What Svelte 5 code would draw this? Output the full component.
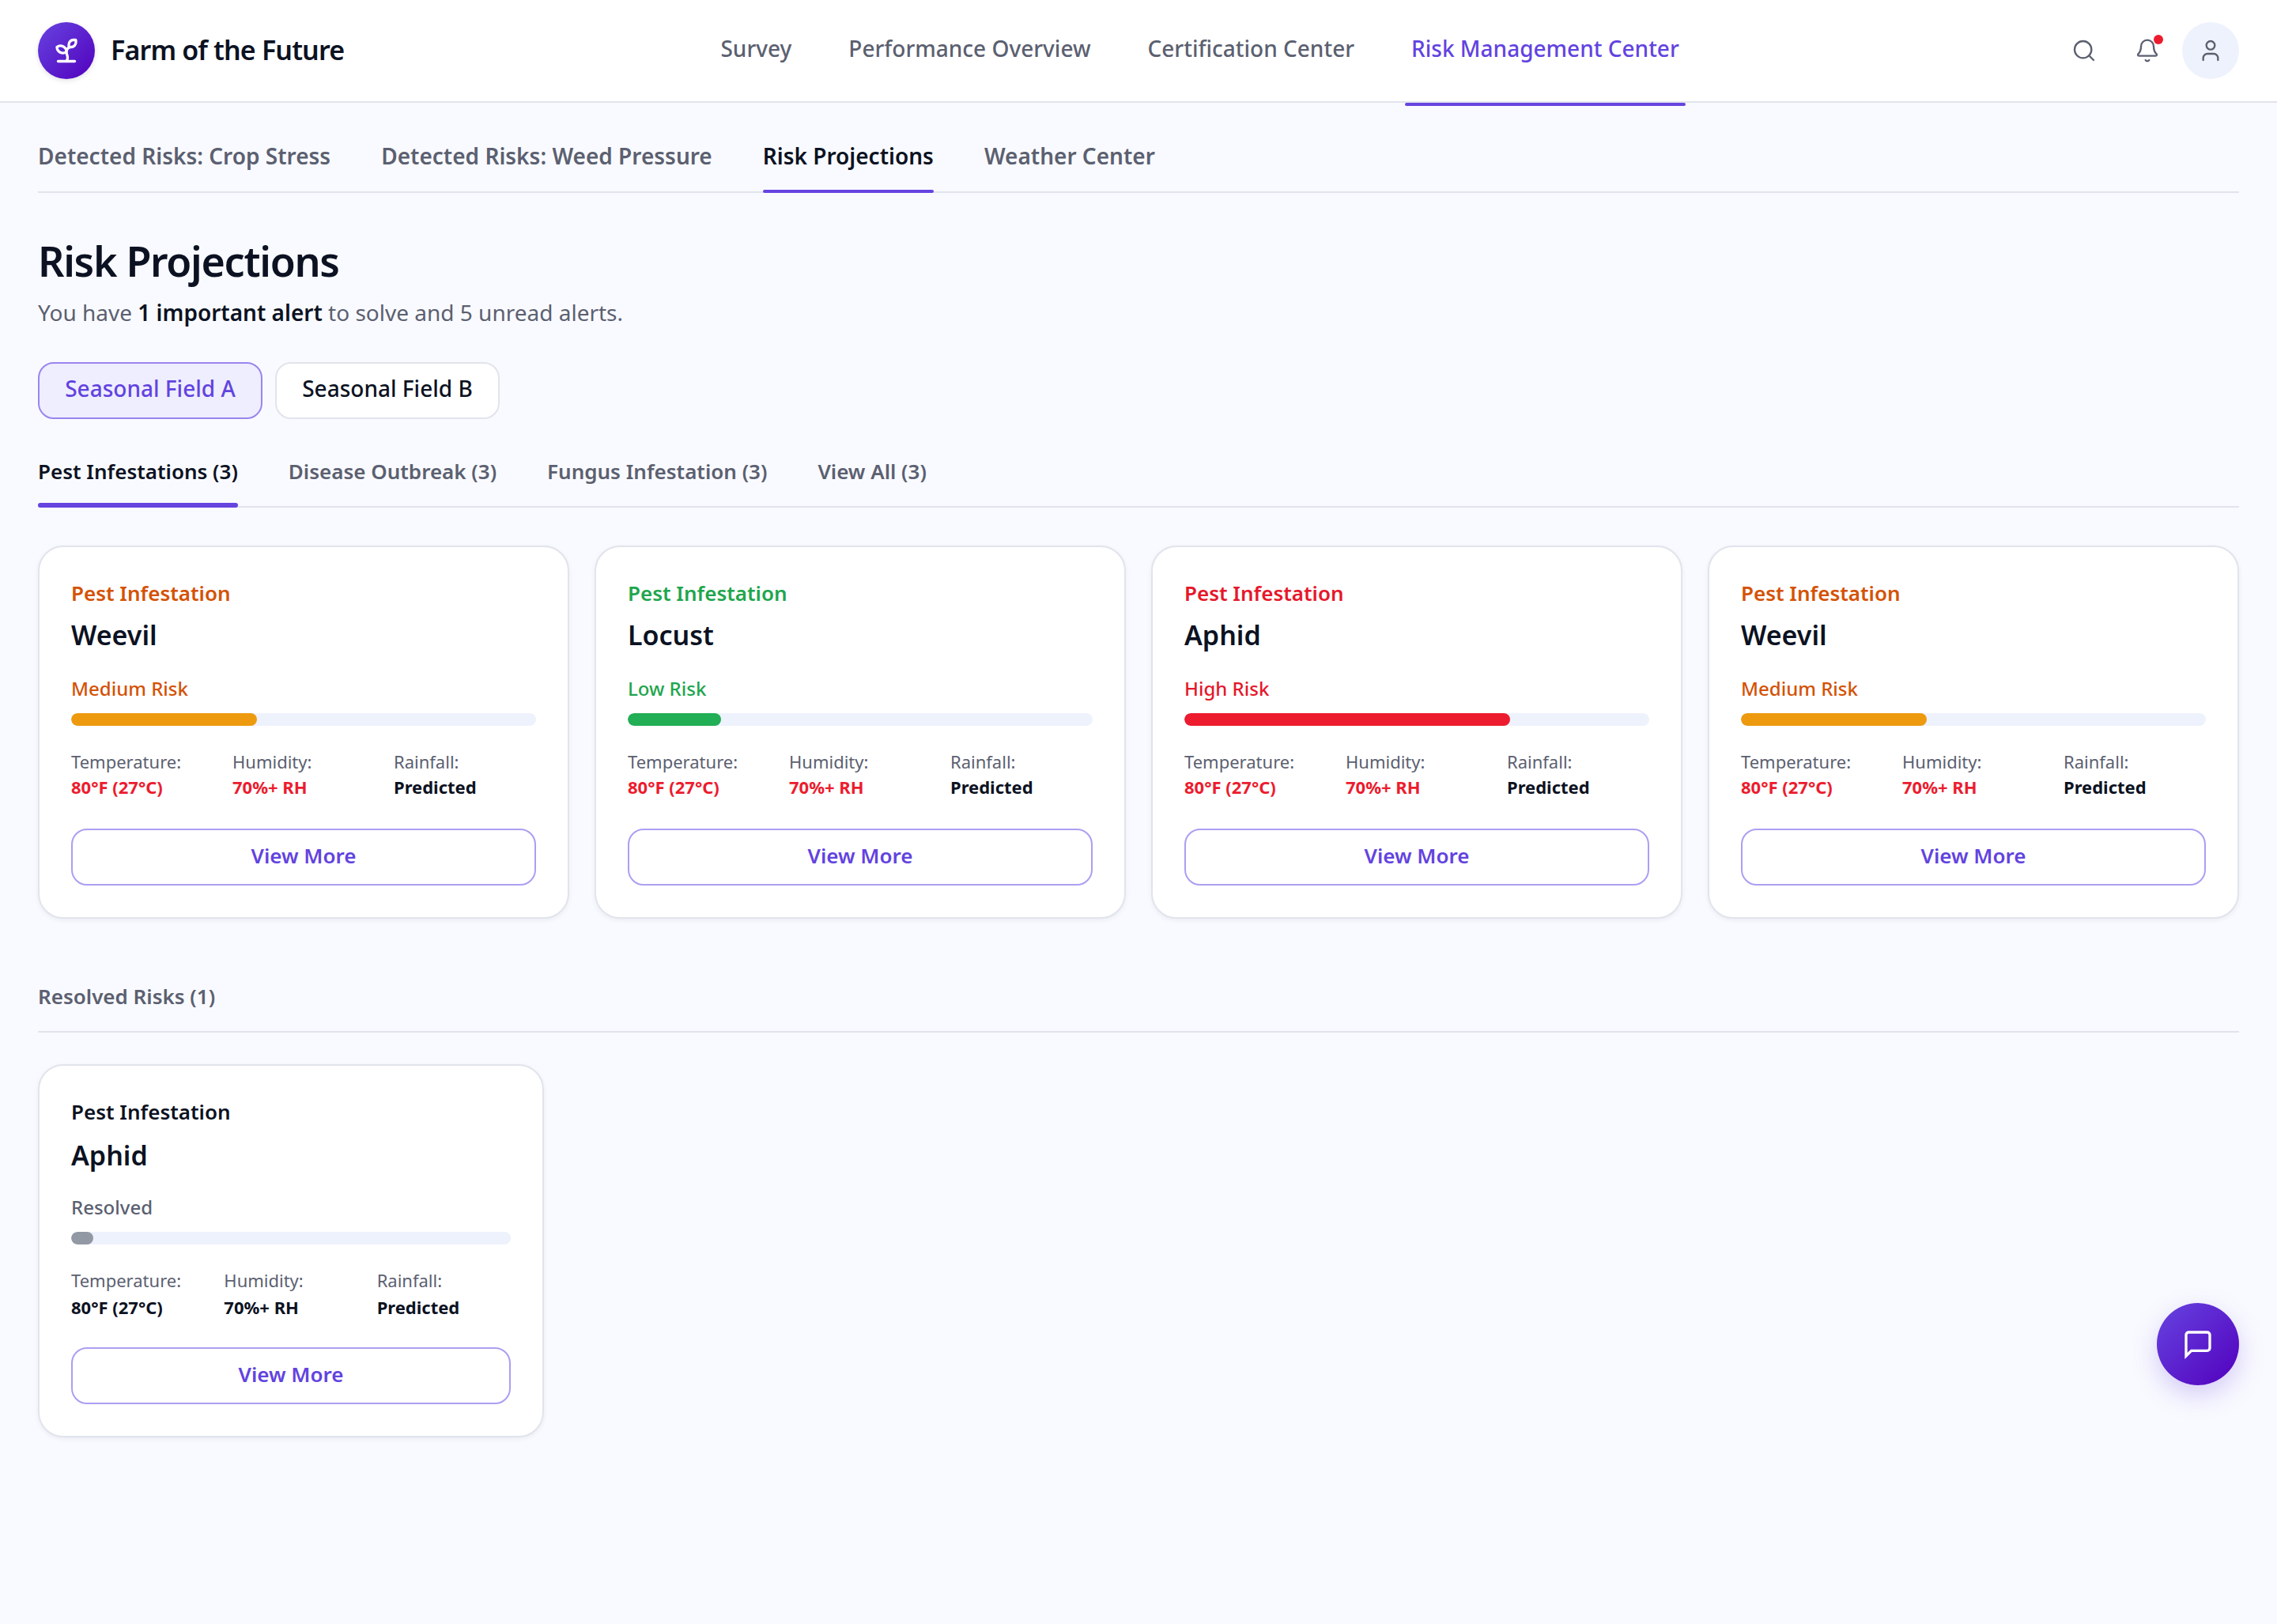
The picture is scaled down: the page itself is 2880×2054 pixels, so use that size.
<script lang="ts">
  interface Metric {
    label: string;
    value: string;
    alert?: boolean;
  }

  interface Risk {
    name: string;
    level: 'low' | 'medium' | 'high' | 'resolved';
    status: string;
    progress: number;
    metrics: Metric[];
  }

  const navItems = ['Survey', 'Performance Overview', 'Certification Center', 'Risk Management Center'];
  const sections = ['Detected Risks: Crop Stress', 'Detected Risks: Weed Pressure', 'Risk Projections', 'Weather Center'];
  const fields = ['Seasonal Field A', 'Seasonal Field B'];
  const categories = ['Pest Infestations (3)', 'Disease Outbreak (3)', 'Fungus Infestation (3)', 'View All (3)'];

  let activeNav = $state('Risk Management Center');
  let activeSection = $state('Risk Projections');
  let activeField = $state('Seasonal Field A');
  let activeCategory = $state('Pest Infestations (3)');

  function conditions(alert: boolean): Metric[] {
    return [
      { label: 'Temperature:', value: '80°F (27°C)', alert },
      { label: 'Humidity:', value: '70%+ RH', alert },
      { label: 'Rainfall:', value: 'Predicted' }
    ];
  }

  const activeRisks: Risk[] = [
    { name: 'Weevil', level: 'medium', status: 'Medium Risk', progress: 40, metrics: conditions(true) },
    { name: 'Locust', level: 'low', status: 'Low Risk', progress: 20, metrics: conditions(true) },
    { name: 'Aphid', level: 'high', status: 'High Risk', progress: 70, metrics: conditions(true) },
    { name: 'Weevil', level: 'medium', status: 'Medium Risk', progress: 40, metrics: conditions(true) }
  ];

  const resolvedRisks: Risk[] = [
    { name: 'Aphid', level: 'resolved', status: 'Resolved', progress: 5, metrics: conditions(false) }
  ];
</script>

{#snippet riskCard(risk: Risk)}
  <article class="card {risk.level}">
    <p class="card-category">Pest Infestation</p>
    <h3 class="card-title">{risk.name}</h3>
    <p class="card-status">{risk.status}</p>
    <div class="track">
      <div class="fill" style="width: {risk.progress}%"></div>
    </div>
    <dl class="metrics">
      {#each risk.metrics as metric}
        <div>
          <dt>{metric.label}</dt>
          <dd class:alert={metric.alert}>{metric.value}</dd>
        </div>
      {/each}
    </dl>
    <button type="button" class="view-more">View More</button>
  </article>
{/snippet}

<div class="page">
  <header class="topbar">
    <div class="brand">
      <span class="logo">
        <svg viewBox="0 0 24 24" aria-hidden="true">
          <path d="M14 9.536V7a4 4 0 0 1 4-4h1.5a.5.5 0 0 1 .5.5V5a4 4 0 0 1-4 4 4 4 0 0 0-4 4c0 2 1 3 1 5a5 5 0 0 1-1 3" />
          <path d="M4 9a5 5 0 0 1 8 4 5 5 0 0 1-8-4" />
          <path d="M5 21h14" />
        </svg>
      </span>
      <span class="brand-name">Farm of the Future</span>
    </div>

    <nav class="main-nav" aria-label="Main">
      {#each navItems as item}
        <button type="button" class="nav-item" class:active={item === activeNav} onclick={() => (activeNav = item)}>
          {item}
        </button>
      {/each}
    </nav>

    <div class="actions">
      <button type="button" class="icon-btn" aria-label="Search">
        <svg viewBox="0 0 24 24"><circle cx="11" cy="11" r="8" /><path d="m21 21-4.34-4.34" /></svg>
      </button>
      <button type="button" class="icon-btn" aria-label="Notifications">
        <svg viewBox="0 0 24 24">
          <path d="M10.268 21a2 2 0 0 0 3.464 0" />
          <path d="M3.262 15.326A1 1 0 0 0 4 17h16a1 1 0 0 0 .74-1.673C19.41 13.956 18 12.499 18 8A6 6 0 0 0 6 8c0 4.499-1.411 5.956-2.738 7.326" />
        </svg>
        <span class="dot"></span>
      </button>
      <button type="button" class="icon-btn avatar" aria-label="Account">
        <svg viewBox="0 0 24 24"><path d="M19 21v-2a4 4 0 0 0-4-4H9a4 4 0 0 0-4 4v2" /><circle cx="12" cy="7" r="4" /></svg>
      </button>
    </div>
  </header>

  <main>
    <div class="tabs section-tabs">
      {#each sections as section}
        <button type="button" class="tab" class:active={section === activeSection} onclick={() => (activeSection = section)}>
          {section}
        </button>
      {/each}
    </div>

    <h1>Risk Projections</h1>
    <p class="summary">You have <strong>1 important alert</strong> to solve and 5 unread alerts.</p>

    <div class="fields">
      {#each fields as field}
        <button type="button" class="field" class:active={field === activeField} onclick={() => (activeField = field)}>
          {field}
        </button>
      {/each}
    </div>

    <div class="tabs category-tabs">
      {#each categories as category}
        <button type="button" class="tab" class:active={category === activeCategory} onclick={() => (activeCategory = category)}>
          {category}
        </button>
      {/each}
    </div>

    <section class="grid">
      {#each activeRisks as risk}
        {@render riskCard(risk)}
      {/each}
    </section>

    <h2>Resolved Risks (1)</h2>
    <section class="resolved-list">
      {#each resolvedRisks as risk}
        {@render riskCard(risk)}
      {/each}
    </section>
  </main>

  <button type="button" class="chat" aria-label="Open chat">
    <svg viewBox="0 0 24 24"><path d="M21 15a2 2 0 0 1-2 2H7l-4 4V5a2 2 0 0 1 2-2h14a2 2 0 0 1 2 2z" /></svg>
  </button>
</div>

<style>
  :global(body) {
    background: #f9faff;
  }

  .page {
    position: relative;
    box-sizing: border-box;
    min-height: 2054px;
    background: #f9faff;
    color: #0c1222;
    font-family: 'Noto Sans', sans-serif;
    font-size: 28px;
  }

  .page * {
    box-sizing: border-box;
  }

  button {
    margin: 0;
    padding: 0;
    border: none;
    background: none;
    color: inherit;
    font: inherit;
    cursor: pointer;
  }

  h1,
  h2,
  h3,
  p,
  dl,
  dd {
    margin: 0;
  }

  svg {
    display: block;
    fill: none;
    stroke: currentColor;
    stroke-width: 2;
  }

  .topbar {
    display: flex;
    align-items: center;
    justify-content: space-between;
    height: 130px;
    padding: 0 48px;
    background: #fff;
    border-bottom: 2px solid #e1e4ec;
  }

  .brand {
    display: flex;
    align-items: center;
    gap: 20px;
  }

  .logo {
    display: grid;
    place-items: center;
    width: 72px;
    height: 72px;
    border-radius: 50%;
    background: linear-gradient(135deg, #6644e0, #5200bd);
    color: #fff;
    box-shadow: 0 2px 6px rgba(12, 18, 34, 0.12);
  }

  .logo svg {
    width: 36px;
    height: 36px;
    stroke-width: 2.2;
    stroke-linecap: round;
    stroke-linejoin: round;
  }

  .brand-name {
    padding-bottom: 2px;
    font-size: 34px;
    font-weight: 600;
    letter-spacing: -0.025em;
  }

  .main-nav {
    display: flex;
    gap: 56px;
    height: 128px;
  }

  .nav-item {
    position: relative;
    padding: 0 8px 6px;
    color: #5b6070;
    font-weight: 500;
  }

  .nav-item.active {
    color: #6243e0;
  }

  .nav-item.active::after {
    content: '';
    position: absolute;
    left: 0;
    right: 0;
    bottom: -6px;
    height: 4px;
    border-radius: 2px;
    background: #6644e0;
  }

  .actions {
    display: flex;
    gap: 8px;
  }

  .icon-btn {
    position: relative;
    display: grid;
    place-items: center;
    width: 72px;
    height: 72px;
    border-radius: 50%;
    color: #5b6070;
  }

  .icon-btn svg {
    width: 32px;
    height: 32px;
    stroke-width: 1.75;
    stroke-linecap: round;
    stroke-linejoin: round;
  }

  .avatar {
    background: #eef2fc;
  }

  .dot {
    position: absolute;
    top: 16px;
    right: 16px;
    width: 12px;
    height: 12px;
    border-radius: 50%;
    background: #ec1c2e;
  }

  main {
    padding: 32px 48px 0;
  }

  .tabs {
    display: flex;
    gap: 64px;
    border-bottom: 2px solid #e1e4ec;
  }

  .tab {
    position: relative;
    color: #5b6070;
    font-weight: 600;
  }

  .tab.active {
    color: #0c1222;
  }

  .tab.active::after {
    content: '';
    position: absolute;
    left: 0;
    right: 0;
    bottom: -2px;
    height: 4px;
    border-radius: 2px;
    background: #6644e0;
  }

  .section-tabs {
    height: 82px;
  }

  .section-tabs .tab {
    padding-bottom: 10px;
  }

  h1 {
    margin-top: 50px;
    font-size: 52px;
    font-weight: 600;
    line-height: 72px;
    letter-spacing: -0.025em;
  }

  .summary {
    margin-top: 9px;
    color: #5b6070;
    line-height: 40px;
  }

  .summary strong {
    color: #0c1222;
    font-weight: 600;
  }

  .fields {
    display: flex;
    gap: 16px;
    margin-top: 43px;
  }

  .field {
    min-width: 284px;
    height: 72px;
    padding: 0 32px 6px;
    border: 2px solid #e1e4ec;
    border-radius: 20px;
    background: #fff;
    font-weight: 500;
  }

  .field.active {
    border-color: #9a85ee;
    background: #eeeeff;
    color: #6243e0;
  }

  .category-tabs {
    height: 80px;
    margin-top: 32px;
  }

  .category-tabs .tab {
    padding-bottom: 10px;
    font-size: 26px;
  }

  .category-tabs .tab.active::after {
    height: 6px;
    border-radius: 3px;
  }

  .grid {
    display: grid;
    grid-template-columns: repeat(4, 1fr);
    gap: 32px;
    margin-top: 48px;
  }

  .card {
    display: flex;
    flex-direction: column;
    height: 472px;
    padding: 40px;
    border: 2px solid #e1e4ec;
    border-radius: 32px;
    background: #fff;
    box-shadow: 0 2px 6px rgba(12, 18, 34, 0.06);
  }

  .card-category {
    font-size: 26px;
    font-weight: 600;
    line-height: 36px;
  }

  .card-title {
    margin-top: 11px;
    font-size: 34px;
    font-weight: 600;
    line-height: 48px;
  }

  .card-status {
    margin-top: 26px;
    font-size: 24px;
    font-weight: 500;
    line-height: 35px;
  }

  .track {
    height: 16px;
    margin-top: 14px;
    border-radius: 8px;
    background: #eef2fc;
    overflow: hidden;
  }

  .fill {
    height: 100%;
    border-radius: 8px;
  }

  .medium .card-category,
  .medium .card-status {
    color: #d45205;
  }

  .medium .fill {
    background: #ed9a0e;
  }

  .low .card-category,
  .low .card-status {
    color: #1fa64d;
  }

  .low .fill {
    background: #22ae54;
  }

  .high .card-category,
  .high .card-status {
    color: #e5182b;
  }

  .high .fill {
    background: #ec1c2e;
  }

  .metrics {
    display: grid;
    grid-template-columns: repeat(3, 1fr);
    gap: 24px;
    margin-top: 29px;
    font-size: 22px;
    line-height: 32px;
    white-space: nowrap;
  }

  .metrics dt {
    color: #5b6070;
  }

  .metrics dd {
    font-weight: 700;
  }

  .metrics dd.alert {
    color: #ec1c2e;
  }

  .resolved .card-title {
    margin-top: 13px;
  }

  .resolved .card-status {
    margin-top: 24px;
    color: #5b6070;
  }

  .resolved .fill {
    background: #9299a5;
  }

  .resolved .metrics dd {
    margin-top: 2px;
  }

  .view-more {
    height: 72px;
    margin-top: auto;
    padding-bottom: 4px;
    border: 2px solid #ad9ef2;
    border-radius: 20px;
    color: #6243e0;
    font-size: 26px;
    font-weight: 600;
  }

  h2 {
    height: 64px;
    margin-top: 80px;
    border-bottom: 2px solid #e1e4ec;
    color: #5b6070;
    font-size: 26px;
    font-weight: 600;
    line-height: 36px;
  }

  .resolved-list {
    width: 640px;
    margin-top: 40px;
  }

  .chat {
    position: absolute;
    top: 1648px;
    right: 48px;
    display: grid;
    place-items: center;
    width: 104px;
    height: 104px;
    border-radius: 50%;
    background: linear-gradient(135deg, #6644e0, #5200bd);
    color: #fff;
    box-shadow: 0 12px 32px rgba(102, 68, 224, 0.25);
  }

  .chat svg {
    width: 40px;
    height: 40px;
  }
</style>
